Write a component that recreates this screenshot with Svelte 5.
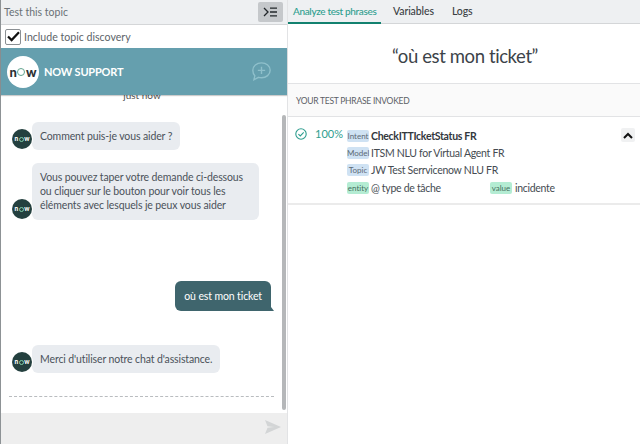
<script>
    const phraseRows = [
        { label: 'Model', text: 'ITSM NLU for Virtual Agent FR' },
        { label: 'Topic', text: 'JW Test Serrvicenow NLU FR' }
    ];
    const tabs = ['Analyze test phrases', 'Variables', 'Logs'];
</script>

<div class="page">
    <!-- Left: test chat -->
    <section class="left">
        <header class="bar left-bar">
            <span class="bar-title">Test this topic</span>
            <button class="collapse" aria-label="Collapse">
                <svg width="15" height="10" viewBox="0 0 15 10" fill="none" stroke="#22272b" stroke-width="1.3">
                    <path d="M1 1l4 4-4 4" />
                    <path d="M7 1.2h7M7 5h7M7 8.8h7" />
                </svg>
            </button>
        </header>

        <label class="discovery">
            <span class="check">
                <svg width="13" height="11" viewBox="0 0 13 11" fill="none" stroke="#111" stroke-width="2.2">
                    <path d="M1 5.5l3.6 3.6L12 1.2" />
                </svg>
            </span>
            Include topic discovery
        </label>

        <div class="banner">
            <div class="logo">
                <span>n<i class="o-big"></i>w</span>
            </div>
            <strong>NOW SUPPORT</strong>
            <svg class="new-chat" width="21" height="21" viewBox="0 0 23 23" fill="none" stroke="#8fc0cb" stroke-width="1.5">
                <path d="M11.5 2c5.3 0 9.5 3.6 9.5 8.2s-4.2 8.2-9.5 8.2c-1.2 0-2.3-.2-3.3-.5L3.2 20.5l1-4.3C2.800 14.800 2 12.600 2 10.200 2 5.600 6.200 2 11.500 2z" />
                <path d="M11.500 6.200v8M7.500 10.200h8" />
            </svg>
        </div>

        <div class="chat">
            <div class="just-now"><span>just now</span></div>

            <div class="msg first">
                <div class="avatar">n<i class="o-small"></i>w</div>
                <div class="bubble">Comment puis-je vous aider ?</div>
            </div>

            <div class="msg second">
                <div class="avatar">n<i class="o-small"></i>w</div>
                <div class="bubble">Vous pouvez taper votre demande ci-dessous<br />ou cliquer sur le bouton pour voir tous les<br />éléments avec lesquels je peux vous aider</div>
            </div>

            <div class="mine">où est mon ticket</div>

            <div class="msg third">
                <div class="avatar">n<i class="o-small"></i>w</div>
                <div class="bubble">Merci d'utiliser notre chat d'assistance.</div>
            </div>

            <div class="dashed"></div>
            <div class="scrollbar"></div>
        </div>

        <footer class="composer">
            <svg width="16" height="14" viewBox="0 0 16 14" fill="#d3d5d6">
                <path d="M0 0l16 7-16 7 2.500-6.200L9 7 2.500 6.200z" />
            </svg>
        </footer>
    </section>

    <!-- Right: analysis -->
    <section class="right">
        <nav class="bar tabs">
            {#each tabs as tab, i}
                <span class="tab" class:active={i === 0}>{tab}</span>
            {/each}
        </nav>

        <h1>“où est mon ticket”</h1>

        <div class="section-head">YOUR TEST PHRASE INVOKED</div>

        <div class="result">
            <svg class="ok" width="12" height="12" viewBox="0 0 12 12" fill="none" stroke="#2f9e8f" stroke-width="1.1">
                <circle cx="6" cy="6" r="5.200" />
                <path d="M3.400 6.100l1.900 1.900 3.400-3.600" />
            </svg>
            <span class="score">100%</span>
            <div class="details">
                <div class="row top">
                    <span class="tag blue">Intent</span><strong>CheckITTIcketStatus FR</strong>
                </div>
                {#each phraseRows as row}
                    <div class="row">
                        <span class="tag blue">{row.label}</span><span>{row.text}</span>
                    </div>
                {/each}
                <div class="row">
                    <span class="cell"><span class="tag green">entity</span><span>@ type de tâche</span></span>
                    <span class="tag green value">value</span><span>incidente</span>
                </div>
            </div>
            <button class="toggle" aria-label="Collapse result">
                <svg width="10" height="7" viewBox="0 0 10 7" fill="none" stroke="#111" stroke-width="2">
                    <path d="M1 6l4-4 4 4" />
                </svg>
            </button>
        </div>
    </section>
</div>

<style>
:global(body) {
    margin: 0;
    background: #fff;
}

.page {
    width: 640px;
    height: 444px;
    display: flex;
    overflow: hidden;
    font-family: Lato, "Noto Sans", sans-serif;
    font-variant-ligatures: none;
    color: #4b525a;
}

.left {
    width: 288px;
    box-sizing: border-box;
    flex: none;
    display: flex;
    flex-direction: column;
    border-left: 1px solid #8d9295;
    border-right: 1px solid #e2e3e5;
}

.bar {
    height: 24px;
    box-sizing: border-box;
    background: #eef0f2;
    border-bottom: 1px solid #d4d6d8;
    display: flex;
    align-items: center;
}

.left-bar {
    justify-content: space-between;
    height: 25px;
    padding: 0 4px 0 3px;
}

.bar-title {
    font-size: 10.500px;
    color: #6a7176;
}

.collapse {
    width: 25px;
    height: 20px;
    padding: 0;
    border: none;
    border-radius: 2px;
    background: #c5c8cb;
    display: flex;
    align-items: center;
    justify-content: center;
}

.discovery {
    height: 23px;
    display: flex;
    align-items: center;
    gap: 3px;
    padding-left: 4px;
    font-size: 10.600px;
    color: #5d6469;
}

.check {
    width: 14px;
    height: 14px;
    border: 1px solid #8a8f93;
    border-radius: 2px;
    display: flex;
    align-items: center;
    justify-content: center;
}

.banner {
    height: 47px;
    flex: none;
    background: #659fae;
    display: flex;
    align-items: center;
    padding: 0 15px 0 6px;
    color: #fff;
    position: relative;
    z-index: 1;
    box-shadow: 0 1px 1px rgba(0, 0, 0, 0.2);
}

.banner strong {
    font-size: 11px;
    font-weight: 700;
    letter-spacing: -0.2px;
    margin-left: 5px;
}

.new-chat {
    margin-left: auto;
}

.logo {
    width: 32px;
    height: 32px;
    border-radius: 50%;
    background: #fff;
    display: flex;
    align-items: center;
    justify-content: center;
    color: #2b3034;
    font-size: 13px;
    font-weight: 900;
}

.logo span {
    display: flex;
    align-items: center;
}

.o-big {
    width: 6px;
    height: 6px;
    margin: 1px 0.5px 0;
    border: 1.800px solid #62a58f;
    border-radius: 50%;
}

.o-small {
    display: inline-block;
    width: 3px;
    height: 3px;
    margin: 0 0.5px;
    border: 1px solid #7fd0a8;
    border-radius: 50%;
}

.chat {
    flex: 1;
    min-height: 0;
    padding: 0 7px 0 11px;
    display: flex;
    flex-direction: column;
    position: relative;
}

.just-now {
    height: 6px;
    overflow: hidden;
    display: flex;
    justify-content: center;
    align-items: flex-end;
    font-size: 10px;
    color: #555;
    padding-right: 8px;
}

.msg {
    display: flex;
    align-items: flex-end;
    font-size: 10.500px;
    letter-spacing: -0.12px;
    line-height: 14px;
}

.first {
    margin-top: 21px;
}

.second {
    margin-top: 13px;
}

.third {
    margin-top: 34px;
}

.avatar {
    width: 20px;
    height: 20px;
    flex: none;
    border-radius: 50%;
    background: #24403f;
    color: #fff;
    font-size: 6.500px;
    font-weight: 900;
    letter-spacing: 0;
    display: flex;
    align-items: center;
    justify-content: center;
    margin-bottom: 1px;
    box-shadow: 0 0 0 1px #fff;
    z-index: 1;
}

.bubble {
    background: #e9ecf0;
    border-radius: 6px;
    padding: 7px 8px;
    color: #4b525a;
    white-space: nowrap;
}

.second .bubble {
    padding: 7px 16px 8px 8px;
}

.mine {
    align-self: flex-end;
    position: relative;
    margin-top: 61px;
    margin-right: 9px;
    background: #3f656d;
    color: #fff;
    font-size: 10.500px;
    letter-spacing: -0.12px;
    line-height: 14px;
    padding: 8px 9px;
    border-radius: 6px 6px 0 6px;
}

/* small tail on the user's bubble */
.mine::after {
    content: '';
    position: absolute;
    right: -3px;
    bottom: 0;
    border-left: 3px solid #3f656d;
    border-top: 4px solid transparent;
}

.dashed {
    margin-top: 23px;
    margin-right: 6px;
    margin-left: -3px;
    border-top: 1px dashed #b9bcbf;
}

.scrollbar {
    position: absolute;
    right: 1px;
    top: 20px;
    width: 4px;
    bottom: 3px;
    border-radius: 2px;
    background: #b5b7b9;
}

.composer {
    height: 31px;
    flex: none;
    box-sizing: border-box;
    background: #eeeeee;
    display: flex;
    align-items: center;
    justify-content: flex-end;
    padding: 0 6px 3px 0;
}

.right {
    flex: 1;
    min-width: 0;
    display: flex;
    flex-direction: column;
}

.tab {
    height: 24px;
    box-sizing: border-box;
    padding: 5px 18px 0 0;
    font-size: 10.500px;
    font-weight: 500;
    letter-spacing: -0.1px;
    color: #3a3f44;
}

.tab.active {
    color: #2f9e8f;
    padding: 5px 0 0 5px;
    margin-right: 12px;
    width: 93px;
    font-size: 10px;
    letter-spacing: -0.35px;
    white-space: nowrap;
    border-bottom: 2px solid #12816f;
}

h1 {
    margin: 0;
    height: 60px;
    flex: none;
    box-sizing: border-box;
    display: flex;
    align-items: center;
    justify-content: center;
    padding: 5px 0 0 2px;
    font-size: 18.500px;
    letter-spacing: -0.4px;
    font-weight: 400;
    color: #3c4349;
    border-bottom: 1px solid #e2e3e5;
}

.section-head {
    height: 33px;
    flex: none;
    box-sizing: border-box;
    display: flex;
    align-items: center;
    padding: 1px 0 0 8px;
    font-size: 8.500px;
    letter-spacing: -0.25px;
    color: #5a6066;
    background: #fafafa;
    border-bottom: 1px solid #e2e3e5;
}

.result {
    height: 88px;
    flex: none;
    box-sizing: border-box;
    display: flex;
    align-items: flex-start;
    padding: 10px 5px 0 7px;
    border-bottom: 2px solid #ebebeb;
}

.ok {
    margin-top: 1px;
}

.score {
    font-size: 11px;
    color: #2f9e8f;
    margin-left: 8px;
    width: 32px;
    line-height: 14px;
}

.details {
    flex: 1;
    font-size: 10.500px;
    letter-spacing: -0.3px;
}

.row {
    display: flex;
    align-items: center;
    height: 17.300px;
    color: #454b51;
}

.row.top strong {
    color: #33383d;
}

.cell {
    display: flex;
    align-items: center;
    width: 143px;
}

.tag {
    width: 22px;
    box-sizing: border-box;
    flex: none;
    text-align: center;
    font-size: 8px;
    letter-spacing: 0;
    line-height: 12px;
    margin-right: 2px;
    border-radius: 2px;
    color: #5d6a75;
}

.blue {
    background: #cfe2f3;
}

.green {
    background: #b4ecd3;
    color: #45705f;
}

.value {
    margin-right: 3px;
}

.toggle {
    width: 14px;
    height: 14px;
    margin-top: 1px;
    padding: 0;
    border: none;
    border-radius: 2px;
    background: #f0f1f2;
    display: flex;
    align-items: center;
    justify-content: center;
}
</style>
